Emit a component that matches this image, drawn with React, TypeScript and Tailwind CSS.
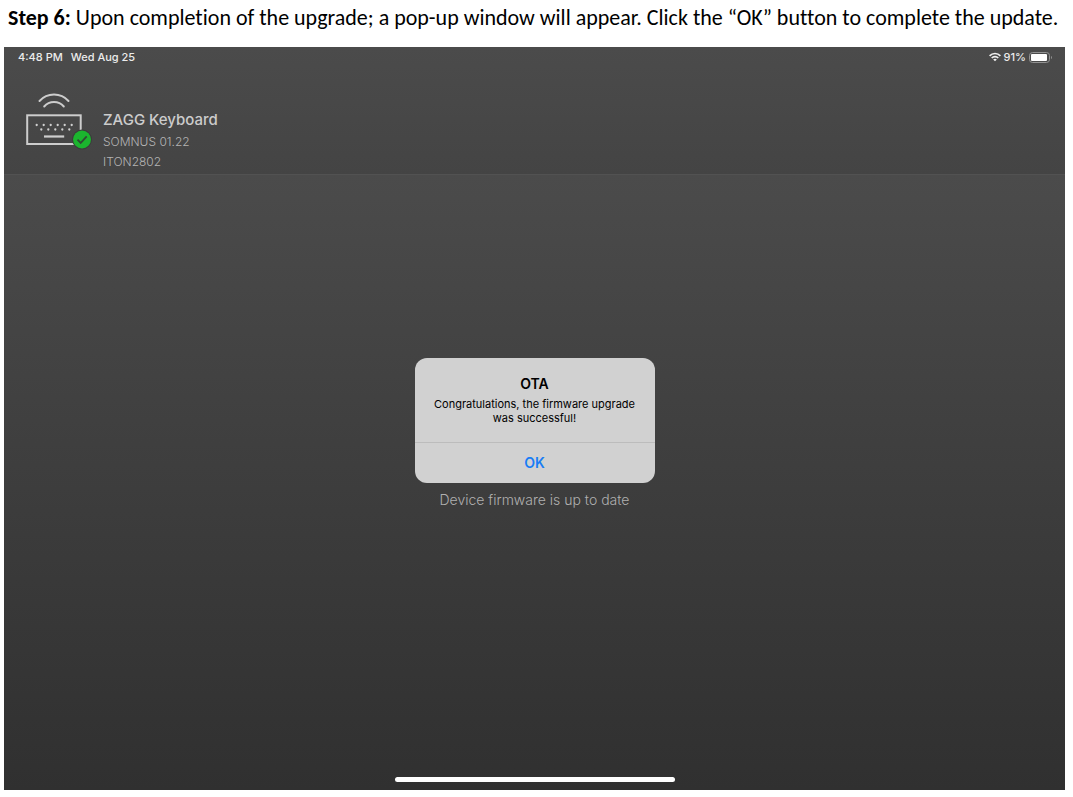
function KeyboardIcon() {
  return (
    <svg width="68" height="58" viewBox="0 0 68 58" fill="none" aria-hidden="true">
      <g stroke="#cdcdcd" strokeWidth="2">
        <path d="M13.500 9A19.400 19.400 0 0 1 42.500 9" strokeLinecap="round" />
        <path d="M18.200 14.500A12.800 12.800 0 0 1 37.800 14.500" strokeLinecap="round" />
        <rect x="1.200" y="23.300" width="53.500" height="28.700" />
        <path d="M18 44.500H38.200" strokeWidth="2.200" />
      </g>
      <path
        d="M10.700 33H46M15.300 37.500H43.500"
        stroke="#d0d0d0"
        strokeWidth="2.300"
        strokeLinecap="round"
        strokeDasharray="0 7"
      />
      <circle cx="56" cy="47.500" r="10" fill="#3b3b3b" />
      <circle cx="56" cy="47.500" r="9" fill="#1bb52e" />
      <path d="M51.500 47.700L54.700 50.900L60.700 44.300" stroke="#2f4a33" strokeWidth="1.800" />
    </svg>
  )
}

function WifiIcon() {
  return (
    <svg width="12" height="10" viewBox="0 0 12 9" fill="none" stroke="#f0f0f0" strokeWidth="1.700" aria-hidden="true">
      <path d="M0.600 3.300C3.600 0.200 8.400 0.200 11.400 3.300" />
      <path d="M2.700 5.500C4.500 3.700 7.500 3.700 9.300 5.500" />
      <path d="M4.200 6.900C5.200 5.900 6.800 5.900 7.800 6.900L6 8.800Z" fill="#f0f0f0" stroke="none" />
    </svg>
  )
}

function BatteryIcon() {
  return (
    <svg width="24" height="11" viewBox="0 0 24 11" fill="none" aria-hidden="true">
      <rect x="0.500" y="0.500" width="20" height="10" rx="3" stroke="#929292" />
      <rect x="2" y="2" width="16" height="7" rx="1" fill="#fff" />
      <path d="M22 4V7C23.300 6.500 23.300 4.500 22 4Z" fill="#929292" />
    </svg>
  )
}

export default function App() {
  return (
    <div className="flex min-h-screen flex-col bg-white pr-2 pb-[7px] pl-1 font-['Inter',sans-serif]">
      <p className="pt-1 pb-[15px] pl-1 font-['Carlito','Calibri','Lato',sans-serif] text-[22px] leading-7 text-black [font-variant-ligatures:none]">
        <strong>Step 6:</strong> Upon completion of the upgrade; a pop-up window will appear. Click the “OK” button to
        complete the update.
      </p>

      <div className="flex flex-1 flex-col bg-[#303030]">
        <header className="border-b border-[#525252] bg-linear-to-b from-[#4b4b4b] to-[#444444] pb-[2px]">
          {/* Status bar */}
          <div className="flex items-center justify-between pt-[2px] pr-3 pl-[14px] text-[11px] leading-4 font-medium text-[#ececec]">
            <div className="flex gap-2">
              <span>4:48 PM</span>
              <span>Wed Aug 25</span>
            </div>
            <div className="flex items-center gap-[3px]">
              <WifiIcon />
              <span>91%</span>
              <BatteryIcon />
            </div>
          </div>

          {/* Connected device */}
          <div className="flex gap-[9px] pt-[27px] pl-[22px]">
            <KeyboardIcon />
            <div className="pt-[18px] text-[12px] leading-5 font-light text-[#b4b4b4]">
              <h1 className="pb-[2px] text-[15px] leading-5 font-medium text-[#cccccc]">ZAGG Keyboard</h1>
              <p>SOMNUS 01.22</p>
              <p>ITON2802</p>
            </div>
          </div>
        </header>

        <div className="flex flex-1 flex-col bg-linear-to-b from-[#4b4b4b] to-[#303030]">
          <main className="flex flex-1 flex-col items-center justify-center pb-[84px]">
            <div
              role="alertdialog"
              aria-labelledby="alert-title"
              aria-describedby="alert-message"
              className="w-60 overflow-hidden rounded-xl bg-[#d1d1d1] text-center text-black"
            >
              <div className="px-3 pt-4 pb-[17px]">
                <h2 id="alert-title" className="text-[14px] leading-5 font-semibold">
                  OTA
                </h2>
                <p id="alert-message" className="pt-[3px] text-[11px] leading-[14px]">
                  Congratulations, the firmware upgrade was successful!
                </p>
              </div>
              <button
                type="button"
                className="w-full border-t border-[#bcbcbc] text-[14px] leading-10 font-semibold text-[#1a7df5]"
              >
                OK
              </button>
            </div>
            <p className="pt-[7px] text-[14px] leading-5 font-light text-[#b0b0b0]">Device firmware is up to date</p>
          </main>

          {/* Home indicator */}
          <div className="mb-2 h-[5px] w-[280px] self-center rounded-full bg-white" />
        </div>
      </div>
    </div>
  )
}
